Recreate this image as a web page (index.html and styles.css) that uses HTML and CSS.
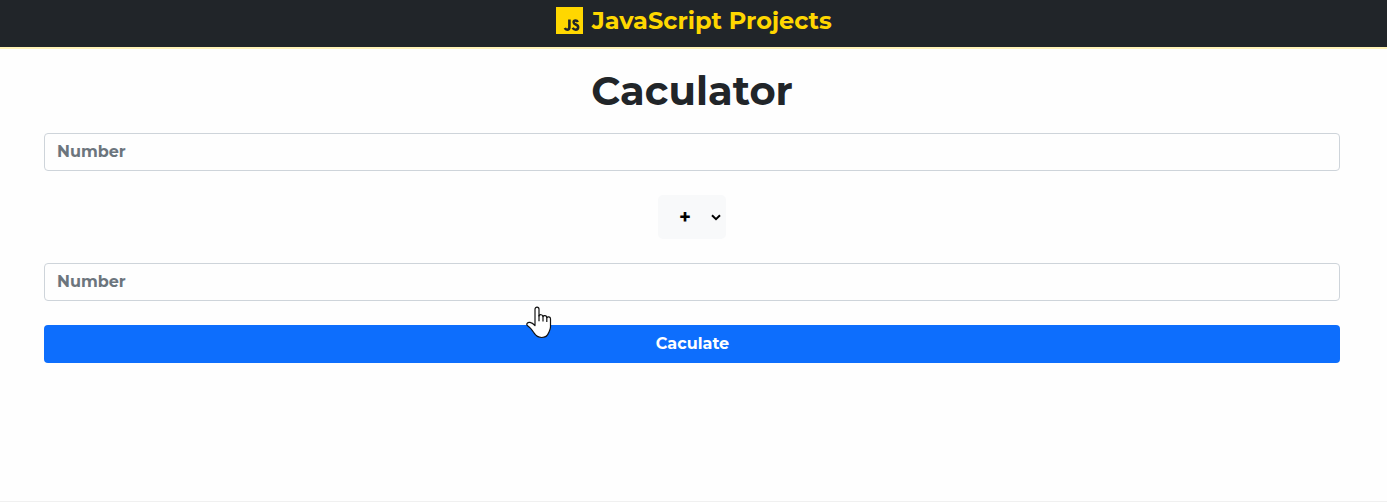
FILE: index.html
```html
<!DOCTYPE html>
<html lang="en">
<head>
<meta charset="utf-8">
<title>JavaScript Projects</title>
<link rel="stylesheet" href="styles.css">
</head>
<body>
<header class="navbar">
  <svg class="logo" viewBox="0 0 27 27" aria-hidden="true">
    <rect width="27" height="27" fill="#ffd700"/>
    <path d="M13.4 12.4v7.9q0 2.4-2.2 2.4-1.6 0-2.4-1.7" fill="none" stroke="#212529" stroke-width="2.6"/>
    <path d="M21.9 15q-.8-1.5-2.4-1.5-1.9 0-1.9 1.8 0 1.4 2.1 2.2 2.5.9 2.5 2.8 0 2.4-2.6 2.4-2 0-2.9-2" fill="none" stroke="#212529" stroke-width="2.5"/>
  </svg>
  <span class="brand">JavaScript Projects</span>
</header>
<main class="container">
  <h1 class="title">Caculator</h1>
  <form class="calculator">
    <input class="field" type="text" placeholder="Number">
    <div class="operator">
      <select class="operator-select"><option>+</option><option>-</option><option>*</option><option>/</option></select>
      <svg class="chevron" viewBox="0 0 10 7" aria-hidden="true"><path d="M1 1.2 5 5.2 9 1.2" fill="none" stroke="#000" stroke-width="2"/></svg>
    </div>
    <input class="field" type="text" placeholder="Number">
    <button class="submit" type="button">Caculate</button>
  </form>
</main>
<svg class="pointer" viewBox="0 0 26 33" aria-hidden="true">
  <path d="M9 18V3.2C9 .4 13 .4 13 3.2V10c.5-1.9 4-1.7 4 .6.6-1.5 3.8-1.2 3.8 1 .7-1.3 3.7-1 3.7 1.2V21c0 2.5-1.2 4-2 6-.9 2.7-3.4 4.5-6.8 4.5-3.8 0-5.7-1.5-7.7-4.6-1.8-2.7-3.5-5.3-6.4-7.1C-.3 18 1.5 16 4 16.4c2.1.3 3.6 1.6 5 3.1z" fill="#fff" stroke="#111" stroke-width="1.2" stroke-linejoin="round"/>
  <path d="M13 9v6.3M17 10v5.5M20.8 11v5" fill="none" stroke="#111" stroke-width="1.2"/>
</svg>
</body>
</html>
```
FILE: styles.css
```css
* { box-sizing: border-box; }
body {
  margin: 0;
  min-height: 502px;
  display: flex;
  flex-direction: column;
  background: #fefefe;
  border-bottom: 1px solid #f0f0f0;
  color: #212529;
  font-family: Montserrat, Inter, sans-serif;
  font-size: 16px;
  font-weight: 700;
}
.navbar {
  height: 49px;
  display: flex;
  justify-content: center;
  align-items: flex-start;
  gap: 8.5px;
  padding: 7px 0 0 1px;
  background: #212529;
  border-bottom: 2px solid #fff3b8;
}
.logo { width: 27px; height: 27px; }
.brand {
  color: #ffd700;
  font-size: 24px;
  line-height: 27px;
}
.container { padding: 18px 47px 0 44px; }
.title {
  margin: 0 0 18px;
  font-size: 40px;
  line-height: 48px;
  text-align: center;
}
.calculator {
  display: flex;
  flex-direction: column;
  gap: 24px;
}
.field, .submit, .operator-select { font: inherit; border-radius: 4px; }
.field {
  height: 38px;
  padding: 0 12px 2px;
  background: #fefefe;
  border: 1px solid #ced4da;
}
.field::placeholder { color: #6c757d; opacity: 1; }
.operator {
  position: relative;
  align-self: center;
  width: 68px;
  height: 44px;
}
.operator-select {
  appearance: none;
  width: 100%;
  height: 100%;
  padding: 0 0 0 21px;
  background: #f8f9fa;
  border: 0;
  border-radius: 5px;
  color: #000;
  font-size: 20px;
}
.chevron {
  position: absolute;
  width: 10px;
  height: 7px;
  right: 5px;
  top: 19px;
}
.submit {
  height: 38px;
  padding: 0 0 2px 1px;
  background: #0d6efd;
  border: 0;
  color: #fff;
}
.pointer {
  position: absolute;
  left: 526px;
  top: 306px;
  width: 26px;
  height: 33px;
}
```
